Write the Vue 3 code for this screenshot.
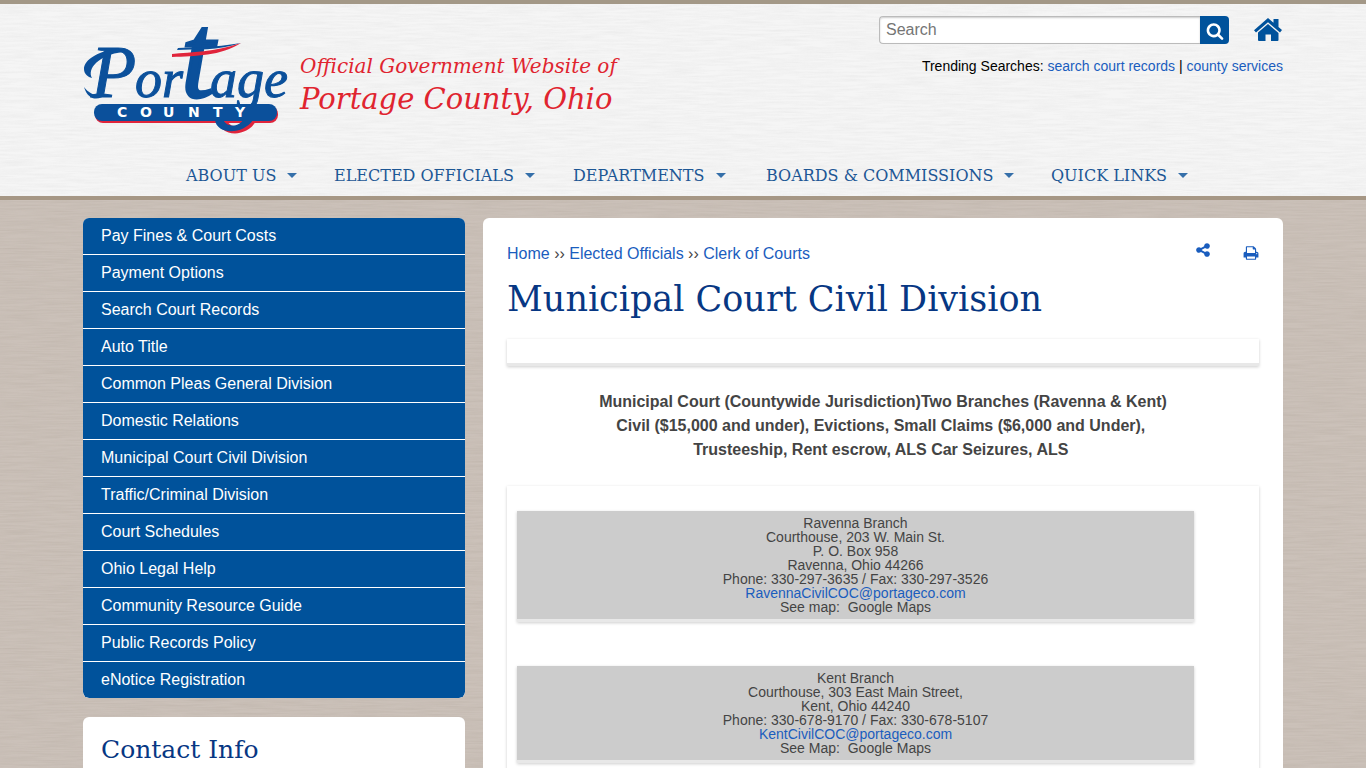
<script setup>
const menu = ['About Us', 'Elected Officials', 'Departments', 'Boards & Commissions', 'Quick Links']
const sideLinks = [
  'Pay Fines & Court Costs',
  'Payment Options',
  'Search Court Records',
  'Auto Title',
  'Common Pleas General Division',
  'Domestic Relations',
  'Municipal Court Civil Division',
  'Traffic/Criminal Division',
  'Court Schedules',
  'Ohio Legal Help',
  'Community Resource Guide',
  'Public Records Policy',
  'eNotice Registration',
]
const branches = [
  {
    lines: ['Ravenna Branch', 'Courthouse, 203 W. Main St.', 'P. O. Box 958', 'Ravenna, Ohio 44266', 'Phone: 330-297-3635 / Fax: 330-297-3526'],
    email: 'RavennaCivilCOC@portageco.com',
    map: 'See map:\u00a0 Google Maps',
  },
  {
    lines: ['Kent Branch', 'Courthouse, 303 East Main Street,', 'Kent, Ohio 44240', 'Phone: 330-678-9170 / Fax: 330-678-5107'],
    email: 'KentCivilCOC@portageco.com',
    map: 'See Map:\u00a0 Google Maps',
  },
]
</script>

<template>
  <div class="page">
    <header class="site-header">
      <div class="container top">
        <a class="brand" href="#" aria-label="Portage County">
          <svg width="206" height="108" viewBox="0 0 206 108">
            <rect x="12" y="80" width="183" height="17" rx="8" fill="#e0243b" />
            <path d="M134 92C136 112 164 112 173 95L164 95C158 102 147 103 143 93Z" fill="#e0243b" />
            <rect x="11" y="78" width="183" height="17" rx="8" fill="#0b509b" />
            <path d="M132 94C134 109 160 109 170 94L160 94C156 101 143 102 140 93Z" fill="#0b509b" />
            <text class="script" y="71"><tspan x="8" font-size="74">P</tspan><tspan x="52" font-size="54">or</tspan><tspan class="tall" x="98" font-size="120">t</tspan><tspan x="127" font-size="54">age</tspan></text>
            <path d="M40 23C16 23 1 34 1 43C1 48 5 51 9 52C4 43 15 29 40 26Z" fill="#0b509b" />
            <path d="M1 61C5 75 16 75 23 68C15 71 7 69 1 61Z" fill="#0b509b" />
            <path d="M95 22C110 21 130 22 158 17C135 25 112 23 94 24Z" fill="#0b509b" />
            <path d="M89 28C108 26 132 26 158 17C138 30 112 30 89 31Z" fill="#e0243b" />
            <text class="county" x="34 57 80 105 130 152" y="91">COUNTY</text>
          </svg>
        </a>
        <div class="tagline">
          <span class="tag-small">Official Government Website of</span>
          <span class="tag-big">Portage County, Ohio</span>
        </div>
        <div class="tools">
          <div class="tool-row">
            <form class="search" @submit.prevent>
              <input type="text" placeholder="Search" aria-label="Search" />
              <button type="submit" aria-label="Submit search">
                <svg width="18" height="18" viewBox="0 0 1792 1792"><path fill="#fff" d="M1216 832q0-185-131.5-316.5t-316.5-131.5-316.5 131.5-131.5 316.5 131.5 316.5 316.5 131.5 316.5-131.5 131.5-316.5zm512 832q0 52-38 90t-90 38q-54 0-90-38l-343-342q-179 124-399 124-143 0-273.5-55.5t-225-150-150-225-55.5-273.5 55.5-273.5 150-225 225-150 273.5-55.5 273.5 55.5 225 150 150 225 55.5 273.5q0 220-124 399l343 343q37 37 37 90z" /></svg>
              </button>
            </form>
            <a class="home" href="#" aria-label="Home">
              <svg width="29" height="24" viewBox="0 0 29 24" fill="#00529b">
                <path d="M14 0L19.5 4.8V1H24.5V9L28 12L26 14.6L14 4.2L2 14.6L0 12.2Z" />
                <path d="M14 6L24.5 15V22Q24.500 23 23.500 23H17V16.500H11.500V23H5Q4 23 4 22V14.600Z" />
              </svg>
            </a>
          </div>
          <p class="trending">Trending Searches: <a href="#">search court records</a> | <a href="#">county services</a></p>
        </div>
      </div>
      <nav class="menu" aria-label="Main">
        <a v-for="item in menu" :key="item" href="#">{{ item }}<span class="caret"></span></a>
      </nav>
    </header>

    <div class="container columns">
      <aside>
        <nav class="side" aria-label="Section">
          <a v-for="link in sideLinks" :key="link" href="#">{{ link }}</a>
        </nav>
        <section class="card contact"><h2>Contact Info</h2></section>
      </aside>

      <main class="card content">
        <div class="crumb-row">
          <nav class="crumbs" aria-label="Breadcrumb">
            <a href="#">Home</a> ›› <a href="#">Elected Officials</a> ›› <a href="#">Clerk of Courts</a>
          </nav>
          <div class="actions">
            <a class="share" href="#" aria-label="Share"><svg width="16" height="16" viewBox="0 0 1792 1792"><path fill="currentColor" d="M1344 1024q133 0 226.5 93.5t93.5 226.5-93.5 226.5-226.5 93.5-226.5-93.5-93.5-226.5q0-12 2-34l-360-180q-92 86-218 86-133 0-226.5-93.5t-93.5-226.5 93.5-226.5 226.5-93.5q126 0 218 86l360-180q-2-22-2-34 0-133 93.5-226.5t226.5-93.5 226.5 93.5 93.5 226.5-93.5 226.5-226.5 93.5q-126 0-218-86l-360 180q2 22 2 34t-2 34l360 180q92-86 218-86z" /></svg></a>
            <a class="print" href="#" aria-label="Print"><svg width="16" height="16" viewBox="0 0 1792 1792"><path fill="currentColor" d="M448 1536h896v-256h-896v256zm0-640h896v-384h-160q-40 0-68-28t-28-68v-160h-640v640zm1152 64q0-26-19-45t-45-19-45 19-19 45 19 45 45 19 45-19 19-45zm128 0v416q0 13-9.5 22.5t-22.5 9.5h-224v160q0 40-28 68t-68 28h-960q-40 0-68-28t-28-68v-160h-224q-13 0-22.5-9.5t-9.5-22.5v-416q0-79 56.5-135.5t135.5-56.5h64v-544q0-40 28-68t68-28h672q40 0 88 20t76 48l152 152q28 28 48 76t20 88v256h64q79 0 135.5 56.5t56.5 135.5z" /></svg></a>
          </div>
        </div>
        <h1>Municipal Court Civil Division</h1>
        <div class="panel spacer"></div>
        <p class="intro">
          Municipal Court (Countywide Jurisdiction)Two Branches (Ravenna &amp; Kent)<br />
          Civil ($15,000 and under), Evictions, Small Claims ($6,000 and Under),&nbsp;<br />
          Trusteeship, Rent escrow, ALS Car Seizures, ALS&nbsp;
        </p>
        <div class="panel branches">
          <address v-for="b in branches" :key="b.email" class="panel branch">
            <div v-for="line in b.lines" :key="line">{{ line }}</div>
            <a :href="'mailto:' + b.email">{{ b.email }}</a>
            <div>{{ b.map }}</div>
          </address>
        </div>
      </main>
    </div>
  </div>
</template>

<style>
body { margin: 0; }
</style>

<style scoped>
* { box-sizing: border-box; }
.page {
  height: 100vh;
  overflow: hidden;
  font-family: "Liberation Sans", Arial, sans-serif;
  font-size: 16px;
  color: #444;
  background-color: #cbc1b9;
  background-image: url("data:image/svg+xml,%3Csvg xmlns='http://www.w3.org/2000/svg' width='500' height='400'%3E%3Cfilter id='n' x='0' y='0' width='1' height='1'%3E%3CfeTurbulence type='fractalNoise' baseFrequency='.025 .6' numOctaves='3' stitchTiles='stitch'/%3E%3CfeColorMatrix values='0 0 0 0 .3 0 0 0 0 .25 0 0 0 0 .2 .5 0 0 0 -.15'/%3E%3C/filter%3E%3Crect width='500' height='400' filter='url(%23n)' opacity='.5'/%3E%3C/svg%3E");
}
a { color: #1a5dbe; text-decoration: none; }
.container { width: calc(100% - 32px); max-width: 1200px; margin: 0 auto; }
.site-header {
  border-top: 4px solid #a39887;
  border-bottom: 4px solid #a69785;
  background-color: #f5f5f5;
  background-image: url("data:image/svg+xml,%3Csvg xmlns='http://www.w3.org/2000/svg' width='500' height='400'%3E%3Cfilter id='n' x='0' y='0' width='1' height='1'%3E%3CfeTurbulence type='fractalNoise' baseFrequency='.03 .5' numOctaves='3' stitchTiles='stitch'/%3E%3CfeColorMatrix values='0 0 0 0 .4 0 0 0 0 .4 0 0 0 0 .4 .5 0 0 0 -.17'/%3E%3C/filter%3E%3Crect width='500' height='400' filter='url(%23n)' opacity='.4'/%3E%3C/svg%3E");
}
.top { display: flex; height: 151px; }
.brand { margin: 22px 11px 0 0; }
.brand svg { display: block; overflow: visible; }
.script {
  font-family: "Liberation Serif", serif;
  font-style: italic;
  fill: #0b509b;
  stroke: #0b509b;
  stroke-width: 1px;
}
.tall { stroke-width: 3px; }
.county { font-family: "DejaVu Sans", sans-serif; font-size: 14px; font-weight: 700; fill: #fff; }
.tagline {
  display: flex;
  flex-direction: column;
  padding-top: 48px;
  color: #e0242f;
  font-family: "DejaVu Serif", serif;
  font-style: italic;
  white-space: nowrap;
}
.tag-small { font-size: 20px; line-height: 28px; }
.tag-big { font-size: 29px; line-height: 38px; }
.tools { margin-left: auto; width: 404px; padding-top: 12px; }
.tool-row { display: flex; justify-content: space-between; }
.search { display: flex; width: 350px; height: 28px; }
.search input {
  flex: 1;
  min-width: 0;
  padding: 0 6px;
  border: 1px solid #bbb;
  border-right: 0;
  border-radius: 4px 0 0 4px;
  background: #fff;
  box-shadow: inset 0 1px 2px #ccc;
  font: inherit;
}
.search input::placeholder { color: #757575; }
.search button {
  display: flex;
  align-items: center;
  justify-content: center;
  width: 29px;
  padding: 2px 0 0;
  border: 0;
  border-radius: 0 4px 4px 0;
  background: #00529b;
}
.home { padding-top: 2px; }
.home svg { display: block; }
.trending { margin: 14px 0 0; text-align: right; font-size: 14px; line-height: 16px; color: #000; }
.menu {
  display: grid;
  grid-template-columns: 148px 239px 193px 285px 142px;
  justify-content: center;
  height: 41px;
  padding-left: 13px;
}
.menu a {
  display: flex;
  align-items: center;
  gap: 11px;
  height: 41px;
  text-transform: uppercase;
  white-space: nowrap;
  font-family: "DejaVu Serif", serif;
  font-size: 16px;
  color: #1d5795;
}
.caret { border: 5px solid transparent; border-top-color: #356fa9; border-bottom: 0; }
.columns { display: grid; grid-template-columns: minmax(0, 382fr) minmax(0, 800fr); gap: 18px; padding-top: 18px; }
.card { background: #fff; border-radius: 6px; }
.side { border-radius: 6px; overflow: hidden; background: #fff; }
.side a {
  display: block;
  margin-bottom: 1px;
  padding: 0 18px;
  background: #00529b;
  color: #fff;
  line-height: 36px;
}
.side a:last-child { border-radius: 0 0 6px 6px; margin-bottom: 0; }
.contact { margin-top: 19px; padding: 15px 18px; height: 320px; }
h1, h2 { margin: 0; font-family: "DejaVu Serif", serif; font-weight: 400; color: #073783; }
h2 { font-size: 25px; line-height: 36px; }
h1 { font-size: 35px; line-height: 50px; margin: 8px 0 15px; white-space: nowrap; }
.content { padding: 24px; height: 900px; }
.crumb-row { display: flex; justify-content: space-between; line-height: 24px; }
.actions { display: flex; gap: 32px; }
.actions svg { display: block; }
.print { padding-top: 3px; }
.panel { border-bottom: 3px solid #e8e8e8; box-shadow: 0 1px 3px rgba(0, 0, 0, 0.2); }
.spacer { height: 27px; }
.intro { margin: 24px 0; text-align: center; font-weight: 700; line-height: 24px; }
.branches { display: flex; flex-direction: column; gap: 44px; height: 600px; padding: 25px 65px 0 10px; }
.branch { padding: 5px; background: #ccc; text-align: center; font-size: 14px; line-height: 14px; font-style: normal; }
</style>
